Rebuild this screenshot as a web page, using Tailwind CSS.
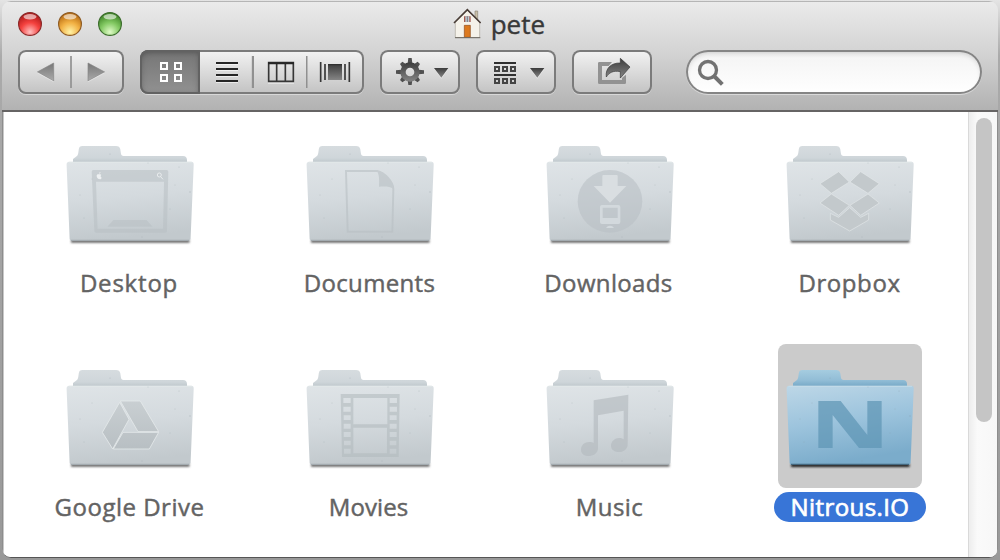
<!DOCTYPE html>
<html lang="en">
<head>
<meta charset="utf-8">
<title>pete</title>
<script src="https://cdn.jsdelivr.net/npm/@tailwindcss/browser@4"></script>
</head>
<body class="h-[560px] w-[1000px] overflow-hidden bg-linear-to-b from-[#e4e4e4] via-[#aaaaaa] via-10% to-[#999999] px-[2px] pt-px font-['Open_Sans','Noto_Sans',sans-serif]">
<svg class="absolute h-0 w-0" aria-hidden="true">
  <defs>
    <linearGradient id="front" x1="0" y1="0" x2=".15" y2="1"><stop offset="0" stop-color="#dfe4e7"/><stop offset=".5" stop-color="#d4dade"/><stop offset="1" stop-color="#c2c9cd"/></linearGradient>
    <linearGradient id="back" x1="0" y1="0" x2="0" y2="1"><stop offset="0" stop-color="#d6dcdf"/><stop offset=".7" stop-color="#cfd6da"/><stop offset="1" stop-color="#bcc5ca"/></linearGradient>
    <linearGradient id="bfront" x1="0" y1="0" x2=".25" y2="1"><stop offset="0" stop-color="#bdd7e7"/><stop offset=".5" stop-color="#9dc4dd"/><stop offset="1" stop-color="#7baccb"/></linearGradient>
    <linearGradient id="bback" x1="0" y1="0" x2="0" y2="1"><stop offset="0" stop-color="#a5cce0"/><stop offset=".6" stop-color="#92bdd6"/><stop offset="1" stop-color="#74a7c5"/></linearGradient>
    <linearGradient id="dark" x1="0" y1="0" x2="0" y2="1"><stop offset="0" stop-color="#3c3c3c"/><stop offset="1" stop-color="#858585"/></linearGradient>
    <linearGradient id="tri" x1="0" y1="0" x2="0" y2="1"><stop offset="0" stop-color="#777"/><stop offset="1" stop-color="#aaa"/></linearGradient>
    <linearGradient id="glyph" x1="0" y1="0" x2="0" y2="1"><stop offset="0" stop-color="#c9cfd2"/><stop offset="1" stop-color="#b8bfc3"/></linearGradient>
    <filter id="soft" x="-10%" y="-300%" width="120%" height="700%"><feGaussianBlur stdDeviation=".8"/></filter>
    <g id="specks" fill="#7f8c93" opacity=".35"><circle cx="52" cy="34" r=".6"/><circle cx="132" cy="72" r=".7"/><circle cx="121" cy="47" r=".6"/><circle cx="90" cy="43" r=".5"/><circle cx="22" cy="75" r=".5"/><circle cx="112" cy="89" r=".5"/><circle cx="34" cy="59" r=".5"/><circle cx="84" cy="117" r=".5"/><circle cx="117" cy="65" r=".5"/><circle cx="26" cy="98" r=".5"/></g>
    <g id="folder">
      <rect x="13" y="120" width="118.500" height="2.600" fill="#555" filter="url(#soft)"/>
      <path d="M15 43V39l3-2.200c1.500-1 2-2 2.300-4l.5-3.500c.3-2.300 1.500-3.300 3.500-3.300H58c2.500 0 4 1.200 4.300 3.300l.6 4c.2 1.800 1 2.700 2.700 2.700H125c2.500 0 4 1.500 4 4V43z" fill="url(#back)"/>
      <path d="M11.500 41.800H133c2 0 2.900 1.200 2.700 3l-3.100 73.700c-.1 1.700-1 2.500-2.700 2.500H14.300c-1.700 0-2.600-.8-2.700-2.500L8.600 44.800c-.1-1.800.9-3 2.900-3z" fill="url(#front)"/>
      <path d="M10.500 42.300h123.500" stroke="#e3e8ea" stroke-width=".8"/>
      <path d="M13 120.300h118" stroke="#a3abb0" stroke-width="1.200"/>
      <use href="#specks"/>
    </g>
    <g id="bluefolder">
      <rect x="13" y="120" width="118.500" height="3" fill="#1a1a1a" filter="url(#soft)"/>
      <path d="M15 43V39l3-2.200c1.500-1 2-2 2.300-4l.5-3.500c.3-2.300 1.500-3.300 3.500-3.300H58c2.500 0 4 1.200 4.300 3.300l.6 4c.2 1.800 1 2.700 2.700 2.700H125c2.500 0 4 1.500 4 4V43z" fill="url(#bback)"/>
      <path d="M11.500 41.800H133c2 0 2.900 1.200 2.700 3l-3.100 73.700c-.1 1.700-1 2.500-2.700 2.500H14.300c-1.700 0-2.600-.8-2.700-2.500L8.600 44.800c-.1-1.800.9-3 2.900-3z" fill="url(#bfront)"/>
      <path d="M10.500 42.300h123.500" stroke="#c8deea" stroke-width=".8"/>
      <path d="M13 120.400h118" stroke="#44677e" stroke-width="1.300"/>
      <use href="#specks"/>
    </g>
  </defs>
</svg>

<div class="flex h-[557px] w-[996px] flex-col overflow-hidden rounded-[9px]">
  <header class="flex h-[111px] shrink-0 flex-col border-b-2 border-[#666464] bg-linear-to-b from-[#ebebeb] via-[#d2d2d2] to-[#b2b2b2] px-[16px] shadow-[inset_0_1px_0_#b5b5b5]">
    <div class="flex h-[49px] items-start justify-between">
      <div class="flex gap-[16px] pt-[11px]">
        <svg width="24" height="24" viewBox="0 0 24 24"><defs><radialGradient id="r" cx=".5" cy=".85" r=".75"><stop offset="0" stop-color="#ffc1c1"/><stop offset=".55" stop-color="#f5423f"/><stop offset="1" stop-color="#b71d1d"/></radialGradient></defs><circle cx="12" cy="12.700" r="11.500" fill="#f4f4f4"/><circle cx="12" cy="12" r="11.400" fill="url(#r)" stroke="#8b2b2b" stroke-width="1.200"/><ellipse cx="12" cy="4.800" rx="6.500" ry="2.700" fill="#fff" opacity=".6"/></svg>
        <svg width="24" height="24" viewBox="0 0 24 24"><defs><radialGradient id="y" cx=".5" cy=".85" r=".75"><stop offset="0" stop-color="#fff3a8"/><stop offset=".55" stop-color="#f2b144"/><stop offset="1" stop-color="#bf7418"/></radialGradient></defs><circle cx="12" cy="12.700" r="11.500" fill="#f4f4f4"/><circle cx="12" cy="12" r="11.400" fill="url(#y)" stroke="#8f5c25" stroke-width="1.200"/><ellipse cx="12" cy="4.800" rx="6.500" ry="2.700" fill="#fff" opacity=".6"/></svg>
        <svg width="24" height="24" viewBox="0 0 24 24"><defs><radialGradient id="g" cx=".5" cy=".85" r=".75"><stop offset="0" stop-color="#e0fbc8"/><stop offset=".55" stop-color="#83c963"/><stop offset="1" stop-color="#468d2d"/></radialGradient></defs><circle cx="12" cy="12.700" r="11.500" fill="#f4f4f4"/><circle cx="12" cy="12" r="11.400" fill="url(#g)" stroke="#3d6d2e" stroke-width="1.200"/><ellipse cx="12" cy="4.800" rx="6.500" ry="2.700" fill="#fff" opacity=".6"/></svg>
      </div>
      <div class="mr-[437px] flex items-start gap-[10px]">
        <svg class="mt-[7px]" width="28" height="32" viewBox="66 24 84 96">
          <path d="M132 52V33h8v29" fill="#c9bfa8" stroke="#8c8577" stroke-width="2"/>
          <path d="M73 66l36-35 37 35v47H73z" fill="#f5f2ea" stroke="#aaa69c" stroke-width="2"/>
          <path d="M69 69l40-40 40 40" fill="none" stroke="#493d37" stroke-width="5"/>
          <path d="M99 49h20v17H99z" fill="#a55b50"/><path d="M103 49h12v17h-12z" fill="#bcc8d3"/><path d="M109 49v17" stroke="#555" stroke-width="2"/>
          <path d="M100 76h18v36h-18z" fill="#dc791e" stroke="#8c4c1c" stroke-width="2"/>
          <path d="M72 113h76" stroke="#6a675f" stroke-width="3"/>
        </svg>
        <h1 class="text-[26px] leading-[47px] text-[#383838] [-webkit-text-stroke:0.4px_#383838]">pete</h1>
      </div>
    </div>

    <div class="flex h-[44px] [&>*]:shrink-0">
      <div class="h-[44px] w-[106px] rounded-[8px] bg-linear-to-b from-[#f4f4f4] to-[#c2c2c2] shadow-[inset_0_0_0_2px_#7b7b7b,0_1px_0_#d8d8d8]">
        <svg width="106" height="44" viewBox="54 150 318 132"><path d="M213 168v96" stroke="#909090" stroke-width="5"/><path d="M112 216l49-27v54zM314 216l-50-27v54z" fill="url(#tri)" stroke="#858585" stroke-width="2"/><path d="M112 218l49 27M264 245l50-27" stroke="#eee" stroke-width="2"/></svg>
      </div>
      <div class="ml-[16px] flex h-[44px] w-[224px] overflow-hidden rounded-[8px] bg-linear-to-b from-[#f4f4f4] to-[#c2c2c2] shadow-[inset_0_0_0_2px_#7b7b7b,0_1px_0_#d8d8d8]">
        <div class="w-[60px] rounded-l-[8px] bg-linear-to-b from-[#757575] to-[#929292] shadow-[inset_0_0_0_2px_#626262,inset_0_2px_6px_#505050]">
          <svg width="60" height="44" viewBox="420 150 180 132" fill="none" stroke="#fff" stroke-width="6"><path d="M483 189h18v18h-18zM525 189h18v18h-18zM483 225h18v18h-18zM525 225h18v18h-18z"/></svg>
        </div>
        <svg width="53" height="44" viewBox="600 150 159 132"><path d="M648 192h66M648 210h66M648 228h66M648 246h66" stroke="#fff" stroke-width="6" opacity=".6"/><path d="M648 189h66M648 207h66M648 225h66M648 243h66" stroke="#262626" stroke-width="6"/><path d="M758 168v96" stroke="#909090" stroke-width="5"/></svg>
        <svg width="53" height="44" viewBox="9 30 159 132"><path d="M10 48v96" stroke="#909090" stroke-width="4"/><path d="M54 129h78" stroke="#fff" stroke-width="4" opacity=".6"/><path d="M56 68h74v56H56zM80 68v56M106 68v56" fill="none" stroke="#373737" stroke-width="5"/><path d="M54 70h78" stroke="#262626" stroke-width="6"/></svg>
        <svg width="58" height="44" viewBox="168 30 174 132"><path d="M170 48v96" stroke="#909090" stroke-width="5"/><path d="M212 66v60M298 66v60M225 72v48M285 72v48" stroke="#373737" stroke-width="5"/><rect x="234" y="72" width="42" height="48" fill="url(#dark)"/><path d="M234 74h42" stroke="#303030" stroke-width="4"/></svg>
      </div>
      <div class="ml-[16px] h-[44px] w-[80px] rounded-[8px] bg-linear-to-b from-[#f4f4f4] to-[#c2c2c2] shadow-[inset_0_0_0_2px_#7b7b7b,0_1px_0_#d8d8d8]">
        <svg width="80" height="44" viewBox="390 30 240 132"><g fill="url(#dark)"><path d="M475 54h10l2 16h-14zM475 135h10l2-16h-14zM438 91v10l16 2V89zM522 91v10l-16 2V89zM450 72l7-7 14 9-12 12zM510 72l-7-7-14 9 12 12zM450 120l7 7 14-9-12-12zM510 120l-7 7-14-9 12-12z" fill="#505050"/><path d="M480 67a29 29 0 1 0 0 58 29 29 0 1 0 0-58zM480 83a13 13 0 1 1 0 26 13 13 0 1 1 0-26z" fill-rule="evenodd"/></g><path d="M553 87h42l-21 29z" fill="#fff" opacity=".6"/><path d="M552 84h43l-21 29z" fill="url(#dark)"/></svg>
      </div>
      <div class="ml-[16px] h-[44px] w-[80px] rounded-[8px] bg-linear-to-b from-[#f4f4f4] to-[#c2c2c2] shadow-[inset_0_0_0_2px_#7b7b7b,0_1px_0_#d8d8d8]">
        <svg width="80" height="44" viewBox="138 150 240 132"><path d="M192 189h66M192 225h66" stroke="#303030" stroke-width="6"/><path d="M195 201h12v12h-12zM219 201h12v12h-12zM243 201h12v12h-12zM195 237h12v12h-12zM219 237h12v12h-12zM243 237h12v12h-12z" fill="none" stroke="#444" stroke-width="6"/><path d="M301 207h42l-21 29z" fill="#fff" opacity=".6"/><path d="M300 204h43l-21 29z" fill="url(#dark)"/></svg>
      </div>
      <div class="ml-[16px] h-[44px] w-[80px] rounded-[8px] bg-linear-to-b from-[#f4f4f4] to-[#c2c2c2] shadow-[inset_0_0_0_2px_#7b7b7b,0_1px_0_#d8d8d8]">
        <svg width="80" height="44" viewBox="426 150 240 132"><path d="M546 186h-38q-4 0-4 4v58q0 4 4 4h76q4 0 4-4v-24l-12 10v6h-60v-42h20z" fill="#929292"/><path d="M571 175l29 26-29 33v-19c-22-4-34 3-42 16-4-26 15-43 42-42z" fill="url(#dark)" stroke="#383838" stroke-width="2"/></svg>
      </div>
      <div class="ml-[34px] h-[44px] w-[296px] rounded-full bg-linear-to-b from-[#f3f3f3] to-[#ffffff] shadow-[inset_0_0_0_2px_#858585,inset_0_3px_5px_#c9c9c9,0_1px_0_#dadada]">
        <svg width="296" height="44" viewBox="48 30 888 132" fill="none" stroke="#727272"><circle cx="114" cy="90" r="25.500" stroke-width="10"/><path d="M132 108l25 25" stroke-width="12"/></svg>
      </div>
    </div>
  </header>

  <main class="flex min-h-0 flex-1 overflow-hidden rounded-b-[8px] border-x border-b border-x-[#8d8d8d] border-b-[#555] bg-white">
    <div class="flex flex-1 border-l border-[#c8c8c8] pt-[8px]">
      <div class="-mr-[20px] ml-[6px] grid w-[960px] shrink-0 grid-cols-4 grid-rows-[224px_224px] text-[24px] text-[#636363] [-webkit-text-stroke:0.45px_#636363]">
        <div class="flex flex-col items-center gap-[4px]">
          <svg width="144" height="144"><use href="#folder"/><g transform="translate(-8 10) scale(.33333)" fill="#b9c0c4" opacity=".55"><path d="M130 120h220q5 0 5 5l-4 179q0 4-5 4H138q-5 0-5-4l-8-179q0-5 5-5zM138 155l5 141h196l3-141z" fill-rule="evenodd"/><path d="M190 270h100l18 20H172z"/><path d="M140 137c0-4 5-5 8-4 3-1 5 0 6 2-3 2-3 6 1 8-2 5-4 5-7 4-4 1-8-4-8-10zM147 131q0-4 5-5-1 5-5 5z" fill="#fff"/><g fill="none" stroke="#fff" stroke-width="2.500"><circle cx="328" cy="135" r="6"/><path d="M332 140l7 8"/></g></g></svg>
          <span class="-ml-[2px] flex h-[30px] items-center tracking-[0.8px]">Desktop</span>
        </div>
        <div class="flex flex-col items-center gap-[4px]">
          <svg width="144" height="144"><use href="#folder"/><g transform="translate(-8 10) scale(.33333)" fill="none" stroke="#b9c0c4" stroke-width="6" opacity=".6"><path d="M168 123h94c22 5 48 33 48 54l-3 128H173z"/><path d="M260 122c8 10 8 28 7 48 18-1 34-1 43 7-3-26-26-50-50-55z" fill="#b9c0c4" stroke="none"/></g></svg>
          <span class="-ml-[1px] flex h-[30px] items-center tracking-[0.35px]">Documents</span>
        </div>
        <div class="flex flex-col items-center gap-[4px]">
          <svg width="144" height="144"><use href="#folder"/><g transform="translate(-8 10) scale(.33333)"><ellipse cx="240" cy="214" rx="97" ry="94" fill="#b9c0c4" opacity=".6"/><path d="M217 138q0-3 3-3h40q3 0 3 3v30h26l-49 50-49-50h26z" fill="#d9dee1"/><path d="M216 225h49q6 0 6 6v45q0 6-6 6h-49q-6 0-6-6v-45q0-6 6-6zM218 233v31h45v-31z" fill="#d3d9dd" fill-rule="evenodd"/><path d="M228 294q4-7 12-7t12 7z" fill="#d3d9dd"/></g></svg>
          <span class="-ml-[3px] flex h-[30px] items-center tracking-[0.35px]">Downloads</span>
        </div>
        <div class="flex flex-col items-center gap-[4px]">
          <svg width="144" height="144"><use href="#folder"/><g transform="translate(-8 10) scale(.33333)" fill="#c3c9cc" stroke="#e3e7e9" stroke-width="2"><path d="M206 125l32 31-54 34-34-29zM272 125l56 36-34 29-54-34zM184 192l54 34-32 30-56-37zM294 192l34 27-56 37-32-30zM181 250l25 12 33-29 33 29 24-12v20l-57 33-58-33z"/></g></svg>
          <span class="-ml-[1px] flex h-[30px] items-center tracking-[0.6px]">Dropbox</span>
        </div>
        <div class="flex flex-col items-center gap-[4px]">
          <svg width="144" height="144"><use href="#folder"/><g transform="translate(-8 11) scale(.33333)" stroke="#e5e9eb" stroke-width="2.500" fill="url(#glyph)"><path d="M209 142l28 51-49 89-31-50zM211 138h60l55 92h-62zM219 232h107l-28 50H190z"/></g></svg>
          <span class="-ml-[1px] flex h-[30px] items-center tracking-[0.5px]">Google Drive</span>
        </div>
        <div class="flex flex-col items-center gap-[4px]">
          <svg width="144" height="144"><use href="#folder"/><g transform="translate(-8 11) scale(.33333)" fill="#b3babe" opacity=".6"><path fill-rule="evenodd" d="M152 117h177l-3 189H156zM190 129v79h102v-79zM190 218v77h101v-77zM160 129h22v15h-22zM160 155h22v15h-22zM161 181h21v14h-21zM161 206h21v15h-21zM161 231h21v15h-21zM162 257h20v14h-20zM162 281h20v15h-20zM299 129h22v15h-22zM299 155h22v15h-22zM299 181h21v14h-21zM299 206h21v15h-21zM299 231h21v15h-21zM299 257h20v14h-20zM299 281h20v15h-20z"/></g></svg>
          <span class="-ml-[3px] flex h-[30px] items-center tracking-[0.1px]">Movies</span>
        </div>
        <div class="flex flex-col items-center gap-[4px]">
          <svg width="144" height="144"><use href="#folder"/><g transform="translate(-8 11) scale(.33333)" fill="#b3babe" opacity=".65"><path d="M191 136l104-17-2 150c0 12-12 22-25 22s-25-6-25-19 12-23 24-23c6 0 10 1 14 4v-86l-77 14v99c0 13-12 23-26 23-15 0-25-7-25-19 0-14 11-23 25-23 6 0 10 1 13 3z"/></g></svg>
          <span class="-ml-px flex h-[30px] items-center tracking-[0.4px]">Music</span>
        </div>
        <div class="flex flex-col items-center gap-[4px]">
          <svg class="rounded-[8px] bg-[#cbcbcb]" width="144" height="144"><use href="#bluefolder"/><path transform="translate(-18 -9) scale(.33333)" d="M175 198h67l80 102V198h43v141h-68l-79-99v99h-43z" fill="#5d94b3" opacity=".7"/></svg>
          <span class="flex h-[30px] w-[152px] items-center justify-center rounded-full bg-[#3875d7] tracking-[0.4px] text-white [-webkit-text-stroke:0.7px_#fff]">Nitrous.IO</span>
        </div>
      </div>
    </div>
    <div class="z-10 w-[29px] shrink-0 border-l border-[#d9d9d9] bg-linear-to-r from-[#ededed] via-[#fafafa] via-30% to-[#f7f7f7] pl-[7px] pt-[6px]">
      <div class="h-[304px] w-[16px] rounded-full bg-[#c5c5c5]"></div>
    </div>
  </main>
</div>
</body>
</html>
